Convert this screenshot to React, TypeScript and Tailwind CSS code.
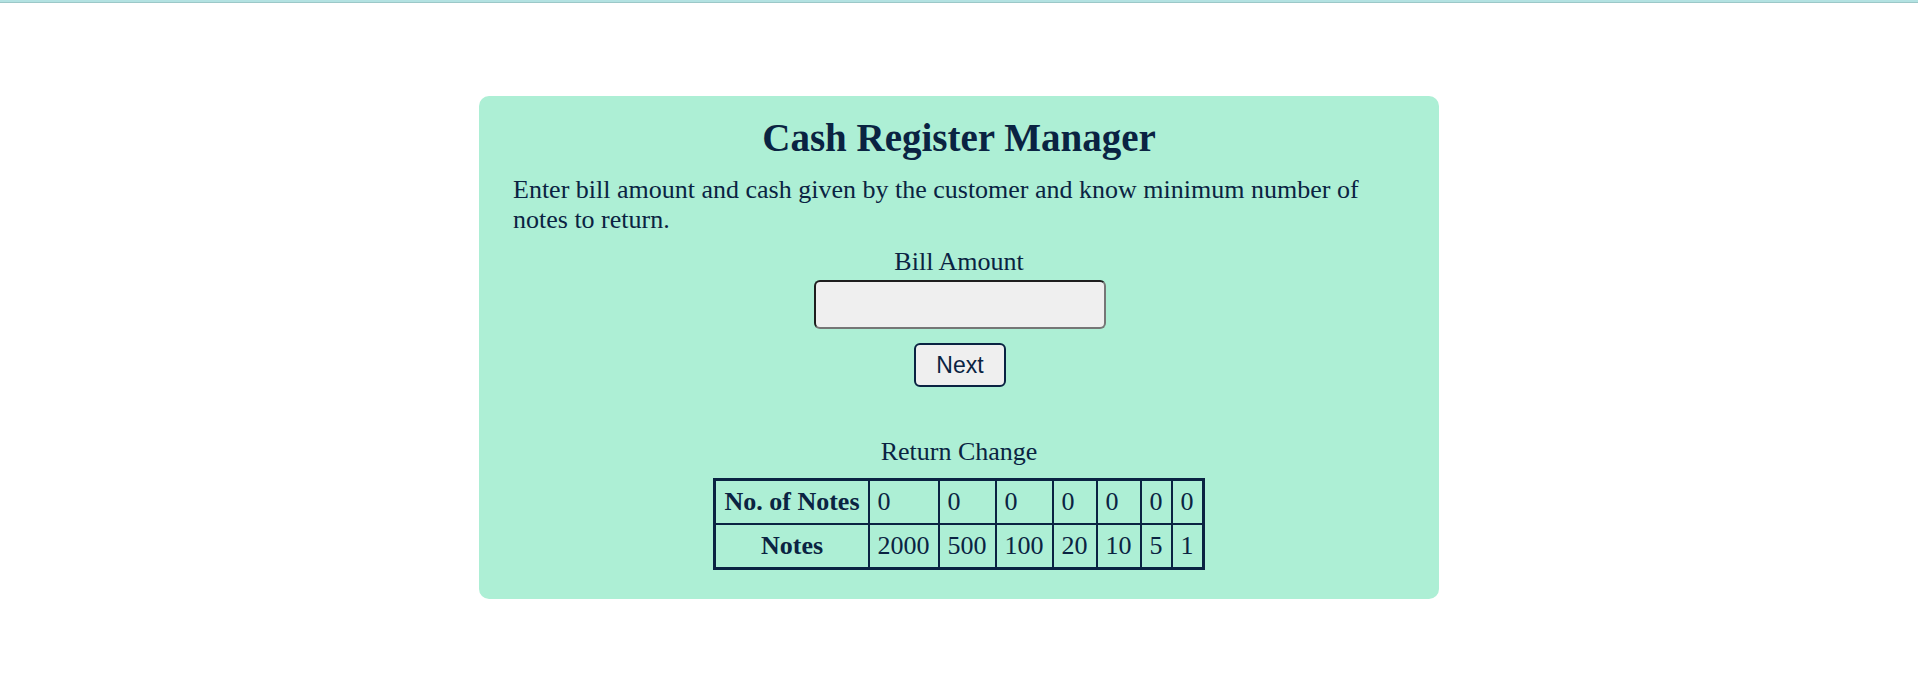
export default function App() {
  const counts = [0, 0, 0, 0, 0, 0, 0]
  const notes = [2000, 500, 100, 20, 10, 5, 1]
  return (
    <div className="min-h-[691px] bg-white" style={{ fontFamily: '"Liberation Serif", "Times New Roman", serif' }}>
      {/* top strip */}
      <div className="h-[2px] bg-[#b3e2e2]" />
      <div className="h-[1px] bg-[#9cc8c8]" />
      <main className="w-[960px] mx-auto mt-[93px] bg-[#adefd5] rounded-[10px] pt-[19px] pb-[29px] px-[34px] text-[#0a2342]">
        <h1 className="text-[39px] font-bold text-center leading-[45px]">Cash Register Manager</h1>
        <p className="mt-[15px] text-[26px] leading-[30px]">
          Enter bill amount and cash given by the customer and know minimum number of notes to return.
        </p>
        <div className="mt-[12px] flex flex-col items-center">
          <label className="text-[26px] leading-[30px]">Bill Amount</label>
          <input
            type="number"
            className="mt-[3px] ml-[2px] w-[292px] h-[49px] bg-[#efefef] rounded-[6px] border-2 border-t-[#1e1e1e] border-l-[#1e1e1e] border-b-[#767676] border-r-[#767676] outline-none"
          />
          <button
            className="mt-[14px] ml-[2px] w-[92px] h-[44px] bg-[#efefef] border-2 border-[#0a2342] rounded-[6px] text-[23px] text-[#0a2342]"
            style={{ fontFamily: '"Liberation Sans", Arial, sans-serif' }}
          >
            Next
          </button>
          <p className="mt-[50px] text-[26px] leading-[30px]">Return Change</p>
          <table className="mt-[11px] border-collapse border-[3px] border-[#0a2342] text-[26px] leading-[30px]">
            <tbody>
              <tr>
                <th className="border-2 border-[#0a2342] px-[8px] py-[6px] font-bold">No. of Notes</th>
                {counts.map((c, i) => (
                  <td key={i} className="border-2 border-[#0a2342] px-[8px] py-[6px] text-left">{c}</td>
                ))}
              </tr>
              <tr>
                <th className="border-2 border-[#0a2342] px-[8px] py-[6px] font-bold">Notes</th>
                {notes.map((n) => (
                  <td key={n} className="border-2 border-[#0a2342] px-[8px] py-[6px] text-left">{n}</td>
                ))}
              </tr>
            </tbody>
          </table>
        </div>
      </main>
    </div>
  )
}
